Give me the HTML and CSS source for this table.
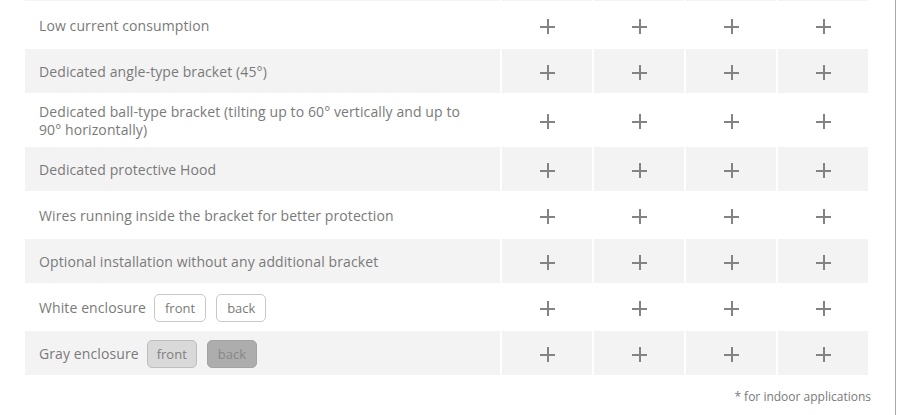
FILE: index.html
```html
<!DOCTYPE html>
<html lang="en">
<head>
<meta charset="utf-8">
<title>Features</title>
<link rel="stylesheet" href="styles.css">
</head>
<body>
<div class="page">
  <table class="features">
    <colgroup>
      <col class="c-name"><col class="c-model"><col class="c-model"><col class="c-model"><col class="c-model">
    </colgroup>
    <tr class="row alt cut"><td></td><td></td><td></td><td></td><td></td></tr>
    <tr class="row">
      <td class="name">Low current consumption</td>
      <td><span class="plus"></span></td><td><span class="plus"></span></td><td><span class="plus"></span></td><td><span class="plus"></span></td>
    </tr>
    <tr class="row alt">
      <td class="name">Dedicated angle-type bracket (45°)</td>
      <td><span class="plus"></span></td><td><span class="plus"></span></td><td><span class="plus"></span></td><td><span class="plus"></span></td>
    </tr>
    <tr class="row">
      <td class="name">Dedicated ball-type bracket (tilting up to 60° vertically and up to 90° horizontally)</td>
      <td><span class="plus"></span></td><td><span class="plus"></span></td><td><span class="plus"></span></td><td><span class="plus"></span></td>
    </tr>
    <tr class="row alt">
      <td class="name">Dedicated protective Hood</td>
      <td><span class="plus"></span></td><td><span class="plus"></span></td><td><span class="plus"></span></td><td><span class="plus"></span></td>
    </tr>
    <tr class="row">
      <td class="name">Wires running inside the bracket for better protection</td>
      <td><span class="plus"></span></td><td><span class="plus"></span></td><td><span class="plus"></span></td><td><span class="plus"></span></td>
    </tr>
    <tr class="row alt">
      <td class="name">Optional installation without any additional bracket</td>
      <td><span class="plus"></span></td><td><span class="plus"></span></td><td><span class="plus"></span></td><td><span class="plus"></span></td>
    </tr>
    <tr class="row">
      <td class="name"><div class="with-btns">White enclosure <span class="btn btn-white first">front</span><span class="btn btn-white">back</span></div></td>
      <td><span class="plus"></span></td><td><span class="plus"></span></td><td><span class="plus"></span></td><td><span class="plus"></span></td>
    </tr>
    <tr class="row alt">
      <td class="name"><div class="with-btns">Gray enclosure <span class="btn btn-light first">front</span><span class="btn btn-dark">back</span></div></td>
      <td><span class="plus"></span></td><td><span class="plus"></span></td><td><span class="plus"></span></td><td><span class="plus"></span></td>
    </tr>
  </table>
  <p class="note">* for indoor applications</p>
</div>
</body>
</html>
```

FILE: styles.css
```css
html, body {
  margin: 0;
  padding: 0;
  background: #fff;
}

body {
  font-family: "Open Sans", "Noto Sans", sans-serif;
  color: #7a7a7a;
}

.page {
  width: 896px;
  height: 415px;
  border-right: 1px solid #a9a9a9;
  padding: 0 0 0 23px;
  box-sizing: border-box;
  overflow: hidden;
}

.features {
  border-collapse: separate;
  border-spacing: 2px;
  margin-top: -2px;
  width: 847px;
  table-layout: fixed;
}

.c-name { width: 475px; }
.c-model { width: 90px; }

.row td {
  height: 30px;
  padding: 7px 0;
  text-align: center;
  vertical-align: middle;
  font-size: 14px;
  line-height: 18px;
}

.row.alt td {
  background: #f3f3f3;
}

.row td.name {
  text-align: left;
  padding: 8px 28px 6px 14px;
  letter-spacing: 0.1px;
}

.row.cut td {
  height: 1px;
  padding: 0;
  font-size: 0;
  line-height: 0;
}

.with-btns {
  display: flex;
  align-items: center;
  margin-top: -1px;
}

.btn {
  display: inline-flex;
  align-items: center;
  justify-content: center;
  box-sizing: border-box;
  height: 28px;
  border-radius: 5px;
  font-size: 13px;
  letter-spacing: 0;
  border: 1px solid #c8c8c8;
  padding: 0 10px;
  margin-left: 10px;
}

.btn.first {
  margin-left: 8px;
}

.btn-white {
  background: #fff;
  color: #7a7a7a;
}

.btn-light {
  background: #d9d9d9;
  border-color: #bdbdbd;
  color: #808080;
  padding: 0 9px;
}

.btn-dark {
  background: #adadad;
  border-color: #a3a3a3;
  color: #888;
}

.plus {
  display: inline-block;
  position: relative;
  width: 15px;
  height: 15px;
  vertical-align: middle;
}

.plus::before,
.plus::after {
  content: "";
  position: absolute;
  background: #838383;
}

.plus::before {
  left: 0;
  top: 7px;
  width: 15px;
  height: 2px;
}

.plus::after {
  left: 7px;
  top: 0;
  width: 2px;
  height: 15px;
}

.note {
  margin: 11px 0 0;
  width: 848px;
  text-align: right;
  font-size: 12px;
  line-height: 18px;
}
```
